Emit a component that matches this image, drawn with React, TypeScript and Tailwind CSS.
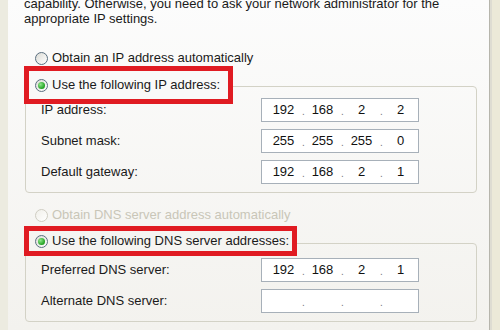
const font = { fontFamily: '"Liberation Sans", Arial, sans-serif' };

function Radio({ checked = false, disabled = false }: { checked?: boolean; disabled?: boolean }) {
  return (
    <span
      className={
        "relative flex h-[13px] w-[13px] shrink-0 items-center justify-center rounded-full border bg-gradient-to-br from-[#dcdcd6] to-white " +
        (disabled ? "border-[#cfcdc2] from-[#f0efe9]" : "border-[#5a6f80]")
      }
    >
      {checked && (
        <span className="h-[7px] w-[7px] rounded-full bg-[radial-gradient(circle_at_35%_35%,#8fe88a,#21a121_70%,#0f7a12)]" />
      )}
    </span>
  );
}

function IpBox({ parts }: { parts: string[] }) {
  return (
    <div className="flex h-[24px] w-[158px] items-center border border-[#a7b0b9] bg-white pl-[3px] text-[13px] text-[#111]">
      {parts.map((p, i) => (
        <div key={i} className="flex items-center">
          <span className="w-[37px] text-center">{p}</span>
          {i < 3 && <span className="w-[2px] translate-y-[2px] text-[10px] leading-none text-[#777]">.</span>}
        </div>
      ))}
    </div>
  );
}

function Row({ label, parts }: { label: string; parts: string[] }) {
  return (
    <div className="flex h-[24px] items-center">
      <span className="w-[235px] pl-[15px] text-[13px] text-[#1a1a1a]">{label}</span>
      <IpBox parts={parts} />
    </div>
  );
}

export default function App() {
  return (
    <div className="flex h-[330px] w-[500px] overflow-hidden" style={font}>
      <div className="w-[8px] bg-[#ecebe0]" />
      <div className="flex flex-1 flex-col bg-gradient-to-b from-[#fcfcfc] to-[#f3f2ee] pl-[16px] pr-[12px]">
        <p className="mt-[-4px] text-[13px] leading-[15px] text-[#1a1a1a]">
          capability. Otherwise, you need to ask your network administrator for the
          <br />
          appropriate IP settings.
        </p>

        <div className="mt-[24px] flex h-[16px] items-center gap-[4px] pl-[11px] text-[13px] text-[#1a1a1a]">
          <Radio />
          <span>Obtain an IP address automatically</span>
        </div>

        <div className="relative ml-[1px] mt-[20px] rounded-[4px] border border-[#d3d2c6] pb-[8px] pt-[11px]">
          <div className="absolute left-[-2px] top-[-21px] flex h-[38px] w-[209px] items-center gap-[4px] border-[5px] border-[#e01b22] bg-[#f9f9f8] pl-[6px] text-[13px] text-[#1a1a1a]">
            <Radio checked />
            <span>Use the following IP address:</span>
          </div>
          <div className="flex flex-col gap-[7px]">
            <Row label="IP address:" parts={["192", "168", "2", "2"]} />
            <Row label="Subnet mask:" parts={["255", "255", "255", "0"]} />
            <Row label="Default gateway:" parts={["192", "168", "2", "1"]} />
          </div>
        </div>

        <div className="mt-[14px] flex h-[16px] items-center gap-[4px] pl-[11px] text-[13px] text-[#c9c6b8]">
          <Radio disabled />
          <span>Obtain DNS server address automatically</span>
        </div>

        <div className="relative ml-[1px] mt-[20px] rounded-[4px] border border-[#d3d2c6] pb-[8px] pt-[14px]">
          <div className="absolute left-[-2px] top-[-18px] flex h-[30px] w-[273px] items-center gap-[4px] border-[5px] border-[#e01b22] bg-[#f5f4f1] pl-[6px] text-[13px] text-[#1a1a1a]">
            <Radio checked />
            <span>Use the following DNS server addresses:</span>
          </div>
          <div className="flex flex-col gap-[7px]">
            <Row label="Preferred DNS server:" parts={["192", "168", "2", "1"]} />
            <Row label="Alternate DNS server:" parts={["", "", "", ""]} />
          </div>
        </div>
      </div>
      <div className="w-[1px] bg-[#b6b5ac]" />
      <div className="w-[2px] bg-[#dedcd2]" />
      <div className="w-[8px] bg-[#ece9d8]" />
    </div>
  );
}
